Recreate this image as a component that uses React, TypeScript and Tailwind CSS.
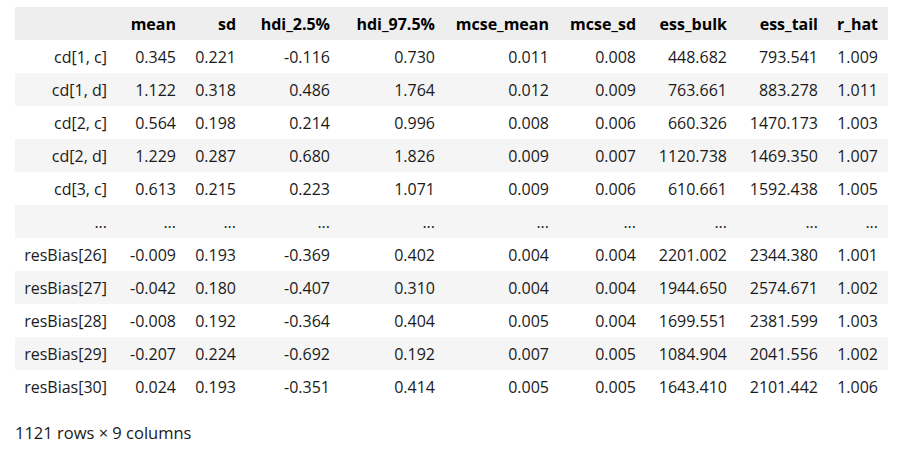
const columns = [
  "mean",
  "sd",
  "hdi_2.5%",
  "hdi_97.5%",
  "mcse_mean",
  "mcse_sd",
  "ess_bulk",
  "ess_tail",
  "r_hat",
];

const rows: [string, string[]][] = [
  ["cd[1, c]", ["0.345", "0.221", "-0.116", "0.730", "0.011", "0.008", "448.682", "793.541", "1.009"]],
  ["cd[1, d]", ["1.122", "0.318", "0.486", "1.764", "0.012", "0.009", "763.661", "883.278", "1.011"]],
  ["cd[2, c]", ["0.564", "0.198", "0.214", "0.996", "0.008", "0.006", "660.326", "1470.173", "1.003"]],
  ["cd[2, d]", ["1.229", "0.287", "0.680", "1.826", "0.009", "0.007", "1120.738", "1469.350", "1.007"]],
  ["cd[3, c]", ["0.613", "0.215", "0.223", "1.071", "0.009", "0.006", "610.661", "1592.438", "1.005"]],
  ["...", ["...", "...", "...", "...", "...", "...", "...", "...", "..."]],
  ["resBias[26]", ["-0.009", "0.193", "-0.369", "0.402", "0.004", "0.004", "2201.002", "2344.380", "1.001"]],
  ["resBias[27]", ["-0.042", "0.180", "-0.407", "0.310", "0.004", "0.004", "1944.650", "2574.671", "1.002"]],
  ["resBias[28]", ["-0.008", "0.192", "-0.364", "0.404", "0.005", "0.004", "1699.551", "2381.599", "1.003"]],
  ["resBias[29]", ["-0.207", "0.224", "-0.692", "0.192", "0.007", "0.005", "1084.904", "2041.556", "1.002"]],
  ["resBias[30]", ["0.024", "0.193", "-0.351", "0.414", "0.005", "0.005", "1643.410", "2101.442", "1.006"]],
];

export default function App() {
  return (
    <div
      className="w-[901px] h-[452px] bg-white text-[#1a1a1a] text-[16px] overflow-hidden pl-[15px] pt-[7px]"
      style={{ fontFamily: '"Open Sans", "Noto Sans", sans-serif' }}
    >
      <table className="table-fixed border-collapse w-[873px]">
        <colgroup>
          <col className="w-[102px]" />
          <col className="w-[69px]" />
          <col className="w-[60px]" />
          <col className="w-[94px]" />
          <col className="w-[105px]" />
          <col className="w-[114px]" />
          <col className="w-[87px]" />
          <col className="w-[91px]" />
          <col className="w-[91px]" />
          <col className="w-[60px]" />
        </colgroup>
        <thead>
          <tr className="h-[33px] bg-[#eeeeee]">
            <th className="p-0" />
            {columns.map((c) => (
              <th
                key={c}
                className="p-0 pr-[10px] text-right font-bold text-black whitespace-nowrap leading-none"
              >
                {c}
              </th>
            ))}
          </tr>
        </thead>
        <tbody>
          {rows.map(([label, values], i) => (
            <tr
              key={label + i}
              className={`h-[33px] ${i % 2 === 1 ? "bg-[#f5f5f5]" : "bg-white"}`}
            >
              <th className="p-0 pr-[10px] text-right font-normal whitespace-nowrap leading-none">
                {label}
              </th>
              {values.map((v, j) => (
                <td
                  key={j}
                  className="p-0 pr-[10px] text-right whitespace-nowrap leading-none"
                >
                  {v}
                </td>
              ))}
            </tr>
          ))}
        </tbody>
      </table>
      <p className="mt-[19px] leading-[22px] text-[16.5px]">1121 rows × 9 columns</p>
    </div>
  );
}
